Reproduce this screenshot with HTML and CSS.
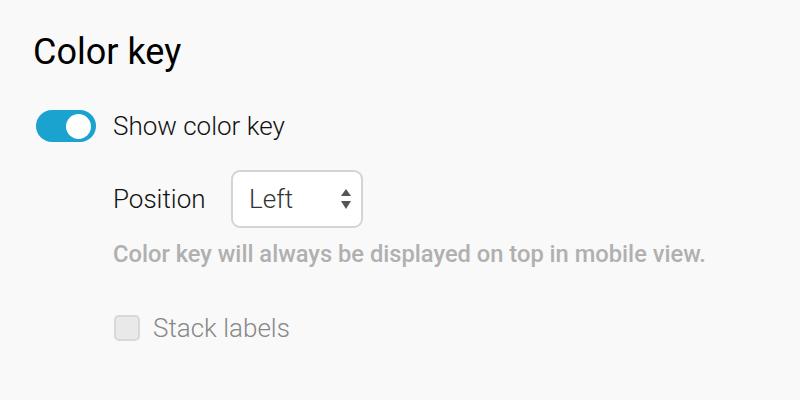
FILE: index.html
```html
<!DOCTYPE html>
<html>
<head>
<meta charset="utf-8">
<link rel="stylesheet" href="styles.css">
</head>
<body>
<div class="panel">
  <h1 class="title">Color key</h1>
  <div class="toggle-row">
    <span class="toggle"><span class="knob"></span></span>
    <span class="toggle-label">Show color key</span>
  </div>
  <div class="sub">
    <div class="position-row">
      <span class="position-label">Position</span>
      <div class="select">
        <span class="select-value">Left</span>
        <span class="arrows">
          <svg width="10" height="20" viewBox="0 0 10 20"><polygon points="5,0 10,7 0,7" fill="#555"/><polygon points="0,12 10,12 5,20" fill="#555"/></svg>
        </span>
      </div>
    </div>
    <div class="hint">Color key will always be displayed on top in mobile view.</div>
    <div class="check-row">
      <span class="checkbox"></span>
      <span class="check-label">Stack labels</span>
    </div>
  </div>
</div>
</body>
</html>
```

FILE: styles.css
```css
html, body {
  margin: 0;
  padding: 0;
  background: #f9f9f9;
}
body {
  width: 800px;
  height: 400px;
  overflow: hidden;
  font-family: Roboto, "Liberation Sans", sans-serif;
}
.panel {
  padding: 30px 0 0 33px;
}
.title {
  margin: 0;
  font-size: 36px;
  font-weight: 400;
  line-height: 44px;
  color: #000;
}
.toggle-row {
  display: flex;
  align-items: center;
  margin-top: 36px;
  margin-left: 3px;
}
.toggle {
  position: relative;
  width: 60px;
  height: 32px;
  border-radius: 16px;
  background: #1aa3cf;
  flex: none;
}
.knob {
  position: absolute;
  top: 4px;
  right: 5px;
  width: 25px;
  height: 25px;
  border-radius: 50%;
  background: #fff;
}
.toggle-label {
  margin-left: 17px;
  font-size: 26px;
  font-weight: 300;
  color: #111;
}
.sub {
  margin-left: 80px;
}
.position-row {
  display: flex;
  align-items: center;
  margin-top: 28px;
}
.position-label {
  font-size: 26px;
  font-weight: 300;
  color: #111;
  width: 118px;
}
.select {
  display: flex;
  align-items: center;
  justify-content: space-between;
  box-sizing: border-box;
  width: 132px;
  height: 58px;
  border: 2px solid #d4d4d4;
  border-radius: 9px;
  background: #fff;
  padding: 0 10px 0 16px;
}
.select-value {
  font-size: 26px;
  font-weight: 300;
  color: #333;
}
.arrows {
  display: flex;
}
.hint {
  margin-top: 12px;
  font-size: 23.7px;
  font-weight: 500;
  color: #b0b0b0;
}
.check-row {
  display: flex;
  align-items: center;
  margin-top: 45px;
}
.checkbox {
  box-sizing: border-box;
  width: 26px;
  height: 26px;
  border: 2px solid #d8d8d8;
  border-radius: 5px;
  background: #e9e9e9;
  margin-left: 1px;
}
.check-label {
  margin-left: 13px;
  font-size: 26px;
  font-weight: 300;
  color: #888;
}
```
